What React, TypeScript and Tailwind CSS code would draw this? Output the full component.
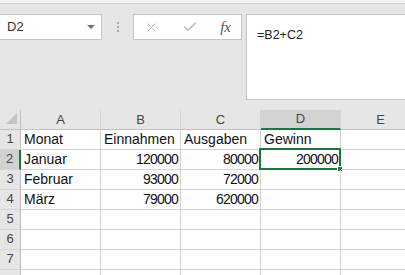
import { X, Check } from "lucide-react";

const cols = ["A", "B", "C", "D", "E"];

type Cell = { v: string; num?: boolean };

const rows: Cell[][] = [
  [{ v: "Monat" }, { v: "Einnahmen" }, { v: "Ausgaben" }, { v: "Gewinn" }, { v: "" }],
  [{ v: "Januar" }, { v: "120000", num: true }, { v: "80000", num: true }, { v: "200000", num: true }, { v: "" }],
  [{ v: "Februar" }, { v: "93000", num: true }, { v: "72000", num: true }, { v: "" }, { v: "" }],
  [{ v: "März" }, { v: "79000", num: true }, { v: "620000", num: true }, { v: "" }, { v: "" }],
  [{ v: "" }, { v: "" }, { v: "" }, { v: "" }, { v: "" }],
  [{ v: "" }, { v: "" }, { v: "" }, { v: "" }, { v: "" }],
  [{ v: "" }, { v: "" }, { v: "" }, { v: "" }, { v: "" }],
  [{ v: "" }, { v: "" }, { v: "" }, { v: "" }, { v: "" }],
];

export default function App() {
  return (
    <div className="w-[405px] h-[275px] overflow-hidden bg-[#e6e6e6] font-['Liberation_Sans',sans-serif] select-none">
      {/* top strip */}
      <div className="h-[4px] bg-[#f2f2f2] border-b border-[#d4d4d4]" />

      {/* name box + formula bar */}
      <div className="flex items-start pt-[10px] mb-[10px]">
        <div className="w-[102px] h-[26px] shrink-0 bg-white border border-[#c6c6c6] border-l-0 flex items-center justify-between pl-[7px] pr-[6px]">
          <span className="text-[13px] text-[#333]">D2</span>
          <svg width="8" height="4" viewBox="0 0 8 4">
            <polygon points="0,0 8,0 4,4" fill="#707070" />
          </svg>
        </div>
        <div className="w-[31px] h-[26px] shrink-0 flex flex-col items-center justify-center gap-[2px]">
          <span className="w-[2px] h-[2px] bg-[#a8a8a8]" />
          <span className="w-[2px] h-[2px] bg-[#a8a8a8]" />
          <span className="w-[2px] h-[2px] bg-[#a8a8a8]" />
        </div>
        <div className="w-[109px] h-[26px] shrink-0 bg-white border border-[#c6c6c6] flex items-center pl-[10px] pr-[10px] justify-between">
          <X size={15} strokeWidth={1.6} color="#b9b9b9" />
          <Check size={16} strokeWidth={2.2} color="#b9b9b9" />
          <span className="font-['Liberation_Serif',serif] italic text-[15px] text-[#555] leading-none">fx</span>
        </div>
        <div className="ml-[4px] w-[200px] h-[86px] shrink-0 bg-white border border-[#c6c6c6] border-r-0 pl-[10px] pt-[7px]">
          <span className="text-[12.5px] text-[#222]">=B2+C2</span>
        </div>
      </div>

      {/* grid */}
      <div className="bg-white">
        <div className="flex h-[20px] bg-[#e6e6e6]">
          <div className="w-[21px] shrink-0 relative border-r border-b border-[#c0c0c0]">
            <svg className="absolute right-[3px] bottom-[5px]" width="11" height="11" viewBox="0 0 11 11">
              <polygon points="11,0 11,11 0,11" fill="#c4c4c4" />
            </svg>
          </div>
          {cols.map((c) => {
            const sel = c === "D";
            return (
              <div
                key={c}
                className={
                  sel
                    ? "w-[80px] shrink-0 flex items-center justify-center text-[13px] text-[#444] bg-[#d2d2d2] border-r border-[#d4d4d4] border-b-2 border-b-[#217346]"
                    : "w-[80px] shrink-0 flex items-center justify-center text-[13px] text-[#444] border-r border-[#d4d4d4] border-b border-b-[#c0c0c0]"
                }
              >
                {c}
              </div>
            );
          })}
        </div>

        {rows.map((r, i) => {
          const rowSel = i === 1;
          return (
            <div key={i} className="flex h-[20px]">
              <div
                className={
                  rowSel
                    ? "w-[21px] shrink-0 flex items-end justify-center pb-[1px] text-[13px] text-[#444] bg-[#d2d2d2] border-b border-[#d4d4d4] border-r-2 border-r-[#217346]"
                    : "w-[21px] shrink-0 flex items-end justify-center pb-[1px] text-[13px] text-[#444] bg-[#e6e6e6] border-b border-[#d4d4d4] border-r border-r-[#c0c0c0]"
                }
              >
                {i < 7 ? i + 1 : ""}
              </div>
              {r.map((cell, j) => {
                const active = i === 1 && j === 3;
                return (
                  <div
                    key={j}
                    className={
                      cell.num
                        ? "relative w-[80px] shrink-0 flex items-end justify-end pr-[2px] pb-[1px] border-r border-b border-[#d4d4d4] text-[14px] leading-[17px] text-[#111] tracking-[-0.8px]"
                        : "relative w-[80px] shrink-0 flex items-end pl-[3px] pb-[1px] border-r border-b border-[#d4d4d4] text-[14px] leading-[17px] text-[#111]"
                    }
                  >
                    {cell.v}
                    {active && (
                      <>
                        <div className="absolute -left-[2px] -top-[2px] -right-[1px] -bottom-[1px] border-2 border-[#217346]" />
                        <div className="absolute -right-[3px] -bottom-[3px] w-[6px] h-[6px] bg-[#217346] border border-white" />
                      </>
                    )}
                  </div>
                );
              })}
            </div>
          );
        })}
      </div>
    </div>
  );
}
